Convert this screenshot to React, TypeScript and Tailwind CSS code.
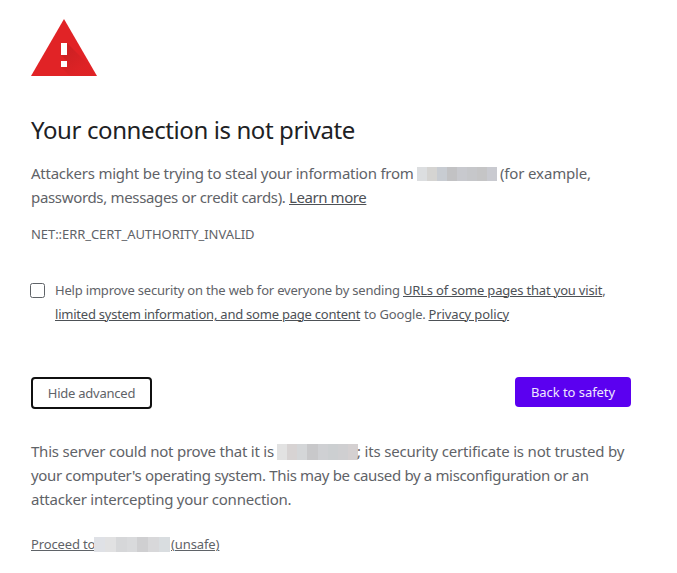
function WarningIcon() {
  return (
    <svg className="block h-[57px] w-[66px]" viewBox="0 0 66 57" aria-hidden="true">
      <defs>
        <linearGradient id="shade" x1="31" y1="24" x2="50" y2="50" gradientUnits="userSpaceOnUse">
          <stop offset="0" stopColor="#a81b1d" stopOpacity="0.45" />
          <stop offset="1" stopColor="#a81b1d" stopOpacity="0.06" />
        </linearGradient>
      </defs>
      <path d="M33 0 66 57H0Z" fill="#e12326" />
      <path d="M36 24 57.5 45.5 64 57H39L30 48V42H36L30 36Z" fill="url(#shade)" />
      <path d="M30 24h6v12h-6zM30 42h6v6h-6z" fill="#fff" />
    </svg>
  );
}

function Redacted({ colors, className }: { colors: string[]; className: string }) {
  return (
    <span className={`flex shrink-0 ${className}`} aria-hidden="true">
      {colors.map((color, i) => (
        <span key={i} className={`flex-1 ${color}`} />
      ))}
    </span>
  );
}

const link = "underline decoration-1 underline-offset-[1px]";
const body = "h-6 text-[15px] leading-6";
const small = "text-[13px] leading-6";

export default function App() {
  return (
    <main className="h-[573px] w-[677px] overflow-hidden whitespace-nowrap bg-white pl-[31px] pt-[19px] font-['Noto_Sans','Liberation_Sans',sans-serif] text-[#5f6368]">
      <WarningIcon />
      <h1 className="mt-[38px] text-[24px] leading-8 tracking-[-0.4px] text-[#202124]">
        Your connection is not private
      </h1>

      <div className="mt-[15px]">
        <div className={`flex ${body}`}>
          <span className="w-[386px] tracking-[-0.24px]">Attackers might be trying to steal your information from</span>
          <Redacted
            className="mt-[6px] h-[14px] w-[80px]"
            colors={["bg-[#dcdee0]", "bg-[#d5d4d2]", "bg-[#c8ccd2]", "bg-[#c2c2c4]", "bg-[#c8c9ce]", "bg-[#c6c7ca]", "bg-[#c5c5c6]", "bg-[#c9cad0]"]}
          />
          <span className="ml-[3px] tracking-[-0.15px]">(for example,</span>
        </div>
        <div className={`flex ${body}`}>
          <span className="w-[258px] tracking-[-0.33px]">passwords, messages or credit cards).</span>
          <a className={`tracking-[-0.42px] text-[#4d5156] ${link}`}>Learn more</a>
        </div>
      </div>

      <p className={`mt-[13px] tracking-[-0.06px] ${small}`}>NET::ERR_CERT_AUTHORITY_INVALID</p>

      <div className="mt-8 flex">
        <span role="checkbox" aria-checked="false" className="-ml-px mr-[10px] mt-[5px] size-[15px] rounded-[2.5px] border border-[#5f6368]" />
        <div className={small}>
          <div className="flex h-6">
            <span className="w-[348px] tracking-[-0.19px]">Help improve security on the web for everyone by sending</span>
            <span className="tracking-[-0.18px]">
              <a className={`text-[#4d5156] ${link}`}>URLs of some pages that you visit</a>,
            </span>
          </div>
          <div className="flex h-6">
            <span className="w-[309px]">
              <a className={`tracking-[-0.225px] text-[#4d5156] ${link}`}>limited system information, and some page content</a>
            </span>
            <span className="w-[65px] tracking-[-0.16px]">to Google.</span>
            <a className={`-ml-[0.5px] tracking-[-0.11px] text-[#4d5156] ${link}`}>Privacy policy</a>
          </div>
        </div>
      </div>

      <div className="mt-[51px] flex w-[600px] items-start justify-between text-[13px]">
        <button className="h-8 w-[121px] rounded-[4px] border-2 border-[#101010] pb-px text-center leading-[26px] tracking-[-0.24px]">
          Hide advanced
        </button>
        <button className="h-[30px] w-[116px] rounded-[4px] bg-[#5b00f0] text-center leading-[30px] tracking-[-0.05px] text-[#efe8fe]">
          Back to safety
        </button>
      </div>

      <div className="mt-[30px]">
        <div className={`flex ${body}`}>
          <span className="w-[246px] tracking-[-0.22px]">This server could not prove that it is</span>
          <Redacted
            className="mt-[5px] h-4 w-[81px]"
            colors={["bg-[#e2e2e2]", "bg-[#d7d3d3]", "bg-[#d4d6d8]", "bg-[#c8c8ca]", "bg-[#cfd0d3]", "bg-[#cccfd1]", "bg-[#cfcfd1]", "bg-[#d4d0d1]"]}
          />
          <span className="-ml-px tracking-[-0.18px]">; its security certificate is not trusted by</span>
        </div>
        <p className={`tracking-[-0.35px] ${body}`}>your computer's operating system. This may be caused by a misconfiguration or an</p>
        <p className={`tracking-[-0.23px] ${body}`}>attacker intercepting your connection.</p>
      </div>

      <div className={`mt-[21px] flex h-6 ${small}`}>
        <a className={`w-[63px] tracking-[-0.14px] ${link}`}>Proceed to</a>
        <Redacted
          className="relative mt-[5px] h-[15px] w-[76px]"
          colors={["bg-[#dfe1e6]", "bg-[#e1e1e2]", "bg-[#d6d7d9]", "bg-[#d9dadc]", "bg-[#cfcfd1]", "bg-[#d8d8da]", "bg-[#d9dde0]"]}
        />
        <a className={`ml-px tracking-[-0.1px] ${link}`}>(unsafe)</a>
      </div>
    </main>
  );
}
